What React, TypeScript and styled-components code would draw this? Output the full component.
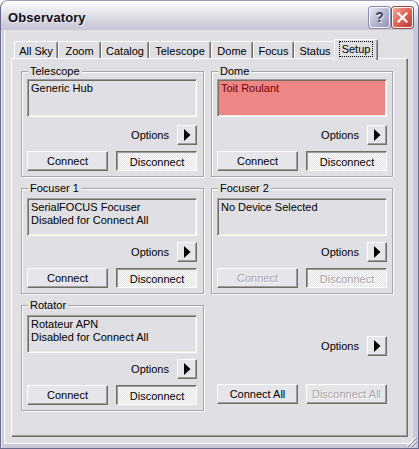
import React from "react";
import styled, { createGlobalStyle, css } from "styled-components";

const FACE = "#e0dfe3";
const BTN = "#e6e5e9";
const SHADOW = "#9d9da1";
const DARK = "#716f64";
const ETCH = "#a5a5a9";
const FONT = `"Liberation Sans", Arial, sans-serif`;

const GlobalStyle = createGlobalStyle`
  html, body { margin: 0; padding: 0; background: #ffffff; }
  body { font-family: ${FONT}; font-size: 11px; color: #000; }
  * { box-sizing: border-box; }
`;

const Window = styled.div`
  position: relative;
  width: 419px;
  height: 449px;
  display: flex;
  flex-direction: column;
  border: 1px solid #6a6a8c;
  border-top-color: #9c9cb6;
  border-radius: 8px 8px 0 0;
  overflow: hidden;
  background: #c6c6d6;
`;

const TitleBar = styled.div`
  height: 29px;
  flex: none;
  display: flex;
  align-items: center;
  justify-content: space-between;
  padding: 3px 5px 0 7px;
  background: linear-gradient(
    to bottom,
    #ffffff 0%,
    #f3f3f8 18%,
    #e2e2ea 45%,
    #d0d0dc 75%,
    #c6c6d6 100%
  );
`;

const Title = styled.span`
  font-family: ${FONT};
  font-weight: bold;
  font-size: 13px;
  letter-spacing: 0.1px;
  color: #101018;
  text-shadow: 1px 1px 0 rgba(255, 255, 255, 0.6);
`;

const CaptionButtons = styled.div`
  display: flex;
  gap: 2px;
`;

const CaptionButton = styled.div<{ $kind: "help" | "close" }>`
  width: 21px;
  height: 21px;
  border-radius: 3px;
  display: flex;
  align-items: center;
  justify-content: center;
  font-family: ${FONT};
  font-weight: bold;
  font-size: 14px;
  border: 1px solid #f6f6fa;
  ${(p) =>
    p.$kind === "help"
      ? css`
          background: linear-gradient(135deg, #e6e6f2 0%, #b8b8d0 50%, #9494b4 100%);
          color: #3e3e5e;
          text-shadow: 1px 1px 0 #e8e8f4;
          box-shadow: 0 0 0 1px #8a8aa8;
        `
      : css`
          background: linear-gradient(135deg, #f4a89c 0%, #e06a5c 45%, #c0392e 100%);
          color: #fff;
          box-shadow: 0 0 0 1px #a0443c;
        `}
`;

const Frame = styled.div`
  flex: 1;
  display: flex;
  padding: 0 5px 5px 3px;
  background: #c9c9d8;
  box-shadow: inset 1px 0 0 #e8e8f0, inset 0 -1px 0 #8a8aa6;
`;

const Client = styled.div`
  flex: 1;
  display: flex;
  flex-direction: column;
  background: ${FACE};
  padding: 9px 5px 6px 6px;
  border-left: 1px solid #ffffff;
  border-bottom: 1px solid #ffffff;
`;

const TabStrip = styled.div`
  height: 19px;
  display: flex;
  align-items: flex-end;
  padding-left: 3px;
  position: relative;
  z-index: 1;
`;

const Tab = styled.div<{ $w: number; $active?: boolean }>`
  width: ${(p) => p.$w}px;
  height: 17px;
  display: flex;
  align-items: center;
  justify-content: center;
  background: ${FACE};
  border-top: 1px solid #ffffff;
  border-left: 1px solid #ffffff;
  border-right: 1px solid ${DARK};
  box-shadow: inset -1px 0 0 ${SHADOW};
  border-radius: 2px 2px 0 0;
  font-size: 11px;
  white-space: nowrap;
  padding-top: 1px;
  ${(p) =>
    p.$active &&
    css`
      width: ${p.$w + 4}px;
      height: 21px;
      margin: 0 -2px -2px -2px;
      padding-bottom: 3px;
      position: relative;
      z-index: 2;
    `}
`;

const FocusLabel = styled.span`
  outline: 1px dotted #000;
  outline-offset: 0;
  padding: 1px 2px;
  line-height: 12px;
`;

const Panel = styled.div`
  height: 379px;
  border: 1px solid;
  border-color: #ffffff ${DARK} ${DARK} #ffffff;
  box-shadow: inset -1px -1px 0 ${SHADOW};
  padding: 6px 0 0 9px;
  background: ${FACE};
`;

const Grid = styled.div`
  display: grid;
  grid-template-columns: 183px 182px;
  grid-auto-rows: 112px;
  column-gap: 7px;
  row-gap: 5px;
`;

const Group = styled.div<{ $low?: boolean }>`
  position: relative;
  margin-top: 6px;
  height: 106px;
  border: 1px solid ${ETCH};
  box-shadow: inset 1px 1px 0 #ffffff, 1px 1px 0 #ffffff;
  padding: ${(p) => (p.$low ? 9 : 7)}px 6px 0 5px;
  display: flex;
  flex-direction: column;
`;

const Legend = styled.span`
  position: absolute;
  top: -7px;
  left: 6px;
  padding: 0 2px;
  line-height: 13px;
  background: ${FACE};
  font-size: 11px;
`;

const Readout = styled.div<{ $alert?: boolean }>`
  height: 38px;
  width: 170px;
  border: 1px solid;
  border-color: ${SHADOW} #ffffff #ffffff ${SHADOW};
  box-shadow: inset 1px 1px 0 ${DARK}, inset -1px -1px 0 #f1efe2;
  padding: 2px 3px;
  line-height: 13px;
  font-size: 11px;
  background: ${(p) => (p.$alert ? "#ef8686" : FACE)};
  color: ${(p) => (p.$alert ? "#6e0000" : "#000")};
`;

const OptionsRow = styled.div<{ $top: number }>`
  margin-top: ${(p) => p.$top}px;
  width: 170px;
  height: 20px;
  display: flex;
  justify-content: flex-end;
  align-items: center;
  gap: 8px;
  font-size: 11px;
`;

const raised = css`
  border: 1px solid;
  border-color: #ffffff ${DARK} ${DARK} #ffffff;
  box-shadow: inset -1px -1px 0 ${SHADOW};
`;

const ArrowButton = styled.div`
  width: 20px;
  height: 20px;
  display: flex;
  align-items: center;
  justify-content: center;
  background: ${BTN};
  ${raised}
  padding-left: 1px;
`;

const ButtonRow = styled.div<{ $top: number }>`
  margin-top: ${(p) => p.$top}px;
  width: 170px;
  display: flex;
  justify-content: space-between;
`;

const PushButton = styled.div<{ $pressed?: boolean; $disabled?: boolean }>`
  width: 81px;
  height: 20px;
  display: flex;
  align-items: center;
  justify-content: center;
  font-size: 11px;
  background: ${BTN};
  ${raised}
  ${(p) =>
    p.$pressed &&
    css`
      border-color: ${DARK} #ffffff #ffffff ${DARK};
      box-shadow: inset 1px 1px 0 ${SHADOW};
      background: repeating-conic-gradient(#ffffff 0 25%, ${FACE} 0 50%) 0 0 / 2px 2px;
      padding: 1px 0 0 1px;
    `}
  ${(p) =>
    p.$disabled &&
    css`
      color: #a4a3a8;
      text-shadow: 1px 1px 0 #ffffff;
    `}
`;

const Standalone = styled.div`
  display: flex;
  flex-direction: column;
  padding: 37px 6px 0 6px;
`;

const Grip = styled.svg`
  position: absolute;
  right: 1px;
  bottom: 1px;
`;

const Arrow = () => (
  <svg width="7" height="12" viewBox="0 0 7 12">
    <path d="M0 0 L6.5 6 L0 12 Z" fill="#000" />
  </svg>
);

type Device = {
  title: string;
  lines: string[];
  alert?: boolean;
  disabled?: boolean;
};

const devices: (Device | null)[] = [
  { title: "Telescope", lines: ["Generic Hub"] },
  { title: "Dome", lines: ["Toit Roulant"], alert: true },
  { title: "Focuser 1", lines: ["SerialFOCUS Focuser", "Disabled for Connect All"] },
  { title: "Focuser 2", lines: ["No Device Selected"], disabled: true },
  { title: "Rotator", lines: ["Rotateur APN", "Disabled for Connect All"] },
  null,
];

const tabs: [string, number][] = [
  ["All Sky", 44],
  ["Zoom", 43],
  ["Catalog", 48],
  ["Telescope", 62],
  ["Dome", 42],
  ["Focus", 41],
  ["Status", 42],
  ["Setup", 40],
];

const DeviceGroup = ({ d, low }: { d: Device; low: boolean }) => (
  <Group $low={low}>
    <Legend>{d.title}</Legend>
    <Readout $alert={d.alert}>
      {d.lines.map((l) => (
        <div key={l}>{l}</div>
      ))}
    </Readout>
    <OptionsRow $top={low ? 6 : 8}>
      <span>Options</span>
      <ArrowButton>
        <Arrow />
      </ArrowButton>
    </OptionsRow>
    <ButtonRow $top={6}>
      <PushButton $disabled={d.disabled}>Connect</PushButton>
      <PushButton $pressed $disabled={d.disabled}>
        Disconnect
      </PushButton>
    </ButtonRow>
  </Group>
);

export default function App() {
  return (
    <>
      <GlobalStyle />
      <Window>
        <TitleBar>
          <Title>Observatory</Title>
          <CaptionButtons>
            <CaptionButton $kind="help">?</CaptionButton>
            <CaptionButton $kind="close">
              <svg width="11" height="11" viewBox="0 0 11 11">
                <path d="M1.5 1.5 L9.5 9.5 M9.5 1.5 L1.5 9.5" stroke="#fff" strokeWidth="2.2" strokeLinecap="square" />
              </svg>
            </CaptionButton>
          </CaptionButtons>
        </TitleBar>
        <Frame>
          <Client>
            <TabStrip>
              {tabs.map(([name, w]) => (
                <Tab key={name} $w={w} $active={name === "Setup"}>
                  {name === "Setup" ? <FocusLabel>{name}</FocusLabel> : name}
                </Tab>
              ))}
            </TabStrip>
            <Panel>
              <Grid>
                {devices.map((d, i) =>
                  d ? (
                    <DeviceGroup key={d.title} d={d} low={i >= 2} />
                  ) : (
                    <Standalone key={i}>
                      <OptionsRow $top={0}>
                        <span>Options</span>
                        <ArrowButton>
                          <Arrow />
                        </ArrowButton>
                      </OptionsRow>
                      <ButtonRow $top={28}>
                        <PushButton>Connect All</PushButton>
                        <PushButton $disabled>Disconnect All</PushButton>
                      </ButtonRow>
                    </Standalone>
                  )
                )}
              </Grid>
            </Panel>
          </Client>
        </Frame>
        <Grip width="12" height="12" viewBox="0 0 12 12">
          <path d="M11 2 L2 11 M11 6 L6 11 M11 10 L10 11" stroke="#ffffff" strokeWidth="1" />
          <path d="M12 3 L3 12 M12 7 L7 12" stroke="#8a8aa6" strokeWidth="1" />
        </Grip>
      </Window>
    </>
  );
}
